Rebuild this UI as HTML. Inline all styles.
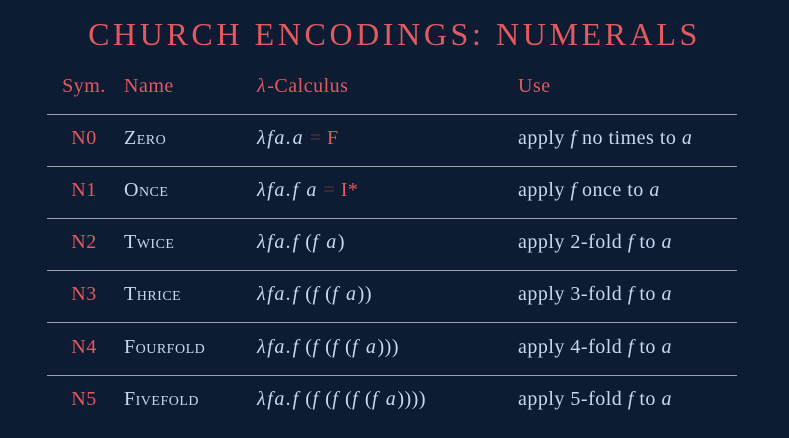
<!DOCTYPE html>
<html><head><style>
body{margin:0;width:789px;height:438px;background:#0d1b33;font-family:"Liberation Serif","Tinos","Times New Roman","DejaVu Serif",serif;position:relative;overflow:hidden}
.t{position:absolute;left:0;width:789px;top:16px;text-align:center;color:#e05a5f;font-size:32px;letter-spacing:3.6px}
.r{position:absolute;left:0;width:789px;height:24px;font-size:20px;color:#c6d9f0;letter-spacing:0.5px}
.r span{position:absolute;white-space:nowrap}
.s{left:62px;width:44px;text-align:center;color:#e05a5f}
.n{left:124px}.l{left:257px}.u{left:518px}
.h span{color:#e05a5f}
.line{position:absolute;left:47px;width:690px;height:1px;background:#9aa3ad}
i{font-style:italic}
.l i{letter-spacing:1.6px}
.eq{color:#6b3340}.red{color:#e05a5f}
.sc{font-variant:small-caps}
</style></head><body>
<div class="t">CHURCH ENCODINGS: NUMERALS</div>
<div class="r h" style="top:75px"><span class="s">Sym.</span><span class="n">Name</span><span class="l"><i>λ</i>-Calculus</span><span class="u">Use</span></div>
<div class="line" style="top:114px"></div>
<div class="r" style="top:127px"><span class="s">N0</span><span class="n sc">Zero</span><span class="l"><i>λfa.a</i> <span class="eq" style="position:static">=</span> <span class="red" style="position:static">F</span></span><span class="u">apply <i>f</i> no times to <i>a</i></span></div>
<div class="line" style="top:166px"></div>
<div class="r" style="top:179px"><span class="s">N1</span><span class="n sc">Once</span><span class="l"><i>λfa.f a</i> <span class="eq" style="position:static">=</span> <span class="red" style="position:static">I*</span></span><span class="u">apply <i>f</i> once to <i>a</i></span></div>
<div class="line" style="top:218px"></div>
<div class="r" style="top:231px"><span class="s">N2</span><span class="n sc">Twice</span><span class="l"><i>λfa.f</i> (<i>f a</i>)</span><span class="u">apply 2-fold <i>f</i> to <i>a</i></span></div>
<div class="line" style="top:270px"></div>
<div class="r" style="top:283px"><span class="s">N3</span><span class="n sc">Thrice</span><span class="l"><i>λfa.f</i> (<i>f</i> (<i>f a</i>))</span><span class="u">apply 3-fold <i>f</i> to <i>a</i></span></div>
<div class="line" style="top:322px"></div>
<div class="r" style="top:336px"><span class="s">N4</span><span class="n sc">Fourfold</span><span class="l"><i>λfa.f</i> (<i>f</i> (<i>f</i> (<i>f a</i>)))</span><span class="u">apply 4-fold <i>f</i> to <i>a</i></span></div>
<div class="line" style="top:375px"></div>
<div class="r" style="top:388px"><span class="s">N5</span><span class="n sc">Fivefold</span><span class="l"><i>λfa.f</i> (<i>f</i> (<i>f</i> (<i>f</i> (<i>f a</i>))))</span><span class="u">apply 5-fold <i>f</i> to <i>a</i></span></div>
</body></html>
